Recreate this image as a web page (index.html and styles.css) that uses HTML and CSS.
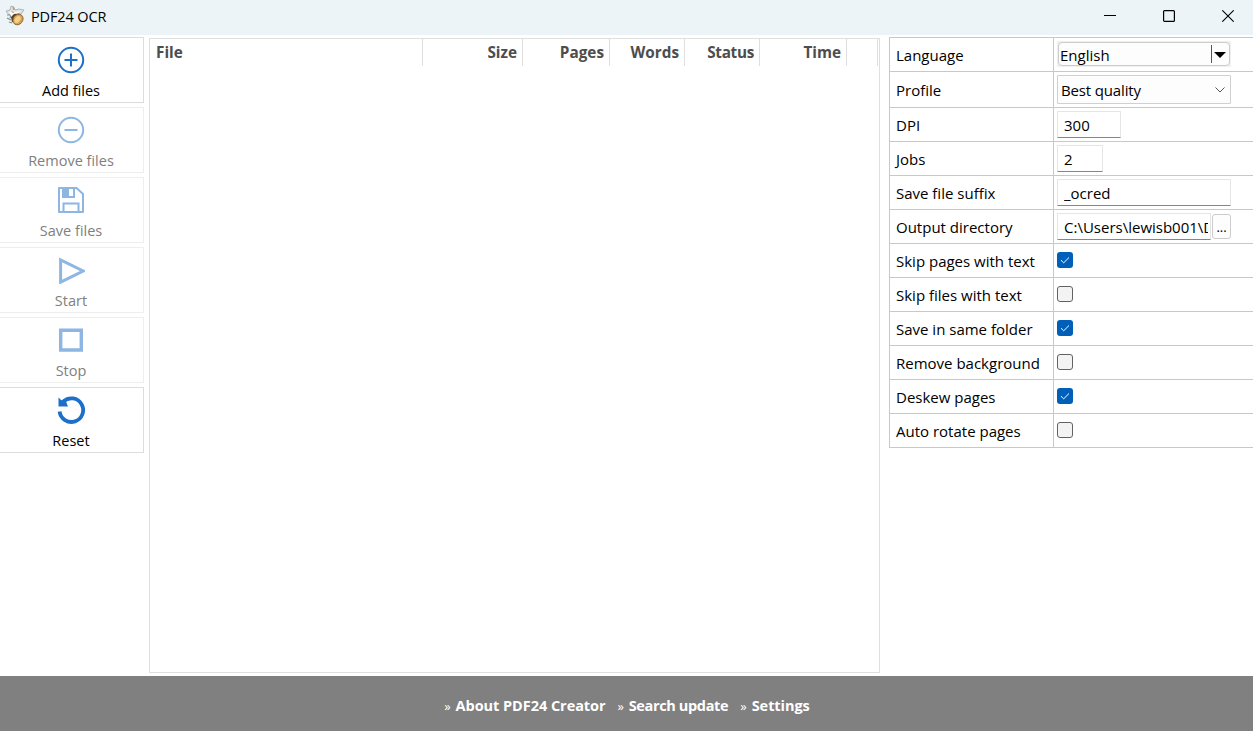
FILE: index.html
```html
<!DOCTYPE html>
<html lang="en">
<head>
  <meta charset="UTF-8">
  <title>PDF24 OCR</title>
  <link rel="stylesheet" href="styles.css">
</head>
<body>
  <header class="titlebar">
    <svg class="logo" width="20" height="22" viewBox="0 0 20 22">
      <path d="M1 6l4-1 1-4 3 1 1 3 4-1 5 1-3 4-4 1-8 0z" fill="#dfe2e4" stroke="#9a9fa4" stroke-width=".7"/>
      <path d="M2 10l4 0-1 3M2 13l4 2M4 17l3 1" fill="none" stroke="#8a8d90" stroke-width="1.200"/>
      <path d="M4 7l4-1 3 1 4-1-3 4-6 1z" fill="#fafafa"/>
      <path d="M6 12l3-3 5-.5 2 2-6 4-3 3z" fill="#4d4032"/>
      <ellipse cx="13" cy="14.500" rx="4.700" ry="5.600" transform="rotate(38 13 14.500)" fill="#d9a450" stroke="#886332" stroke-width=".9"/>
      <ellipse cx="12.500" cy="14.500" rx="2.500" ry="3.800" transform="rotate(38 12.500 14.500)" fill="#f3d18b"/>
      <path d="M6.500 6.500l2.500 1M8 2l1 3" stroke="#d39b38" stroke-width="1.300"/>
    </svg>
    <span class="title">PDF24 OCR</span>
    <div class="window-buttons">
      <svg width="12" height="12" viewBox="0 0 12 12"><path d="M0 5.500h12" stroke="#000"/></svg>
      <svg width="12" height="12" viewBox="0 0 12 12"><rect x=".6" y=".6" width="10.800" height="10.800" rx="1" fill="none" stroke="#000" stroke-width="1.200"/></svg>
      <svg width="12" height="12" viewBox="0 0 12 12"><path d="M.3.300l11.400 11.400M11.700.300L.3 11.700" stroke="#000" stroke-width="1.100"/></svg>
    </div>
  </header>

  <main>
    <nav class="toolbar">
      <button class="tool">
        <svg width="28" height="28" viewBox="0 0 28 28"><circle cx="14" cy="14" r="12.200"/><path d="M14 7.500v13M7.500 14h13"/></svg>
        <span>Add files</span>
      </button>
      <button class="tool" disabled>
        <svg width="28" height="28" viewBox="0 0 28 28"><circle cx="14" cy="14" r="12.200"/><path d="M7.500 14h13"/></svg>
        <span>Remove files</span>
      </button>
      <button class="tool" disabled>
        <svg width="28" height="28" viewBox="0 0 28 28"><path d="M2 2h17.500l6.500 6v18H2z" stroke-linejoin="round"/><path d="M6 2v9h11V2M6.500 26v-8.500h15V26"/><path d="M6 2h5v9H6z" fill="#1d70c9"/></svg>
        <span>Save files</span>
      </button>
      <button class="tool" disabled>
        <svg width="28" height="28" viewBox="0 0 28 28"><path d="M3.600 3.800v22.400L26.200 15z" stroke-width="3"/></svg>
        <span>Start</span>
      </button>
      <button class="tool" disabled>
        <svg width="28" height="28" viewBox="0 0 28 28"><path d="M3.700 4.200h20.600v19.800H3.700z" stroke-width="3.400"/></svg>
        <span>Stop</span>
      </button>
      <button class="tool">
        <svg width="28" height="28" viewBox="0 0 28 28"><path d="M2.600 15.500A11.800 11.800 0 1 0 6.500 5.300" stroke-width="3.800"/><path d="M1.500 1.500L4.300 4.200 8 3l3 7.500H1.500z" fill="#1d70c9" stroke="none"/></svg>
        <span>Reset</span>
      </button>
    </nav>

    <section class="file-list">
      <div class="list-head">
        <div>File</div>
        <div>Size</div>
        <div>Pages</div>
        <div>Words</div>
        <div class="status">Status</div>
        <div>Time</div>
        <div></div>
      </div>
    </section>

    <section class="options">
      <div class="row"><label>Language</label>
        <div class="value"><div class="combo"><div class="combo-inner"><span>English</span><i class="bar"></i><i class="arrow"></i></div></div></div>
      </div>
      <div class="row tall"><label>Profile</label>
        <div class="value"><div class="select"><span>Best quality</span><svg width="12" height="8" viewBox="0 0 12 8"><path d="M1.500 1.500L6 6l4.500-4.500" fill="none" stroke="#555"/></svg></div></div>
      </div>
      <div class="row"><label>DPI</label><div class="value"><input class="dpi" type="text" value="300"></div></div>
      <div class="row"><label>Jobs</label><div class="value"><input class="jobs" type="text" value="2"></div></div>
      <div class="row"><label>Save file suffix</label><div class="value"><input class="suffix" type="text" value="_ocred"></div></div>
      <div class="row"><label>Output directory</label><div class="value"><input class="dir" type="text" value="C:\Users\lewisb001\Documents"><button class="browse">...</button></div></div>
      <div class="row check"><label>Skip pages with text</label><div class="value"><span class="box on"><svg width="16" height="16" viewBox="0 0 16 16"><path d="M4 8.200l2.700 2.600L12 5.500"/></svg></span></div></div>
      <div class="row check"><label>Skip files with text</label><div class="value"><span class="box"></span></div></div>
      <div class="row check"><label>Save in same folder</label><div class="value"><span class="box on"><svg width="16" height="16" viewBox="0 0 16 16"><path d="M4 8.200l2.700 2.600L12 5.500"/></svg></span></div></div>
      <div class="row check"><label>Remove background</label><div class="value"><span class="box"></span></div></div>
      <div class="row check"><label>Deskew pages</label><div class="value"><span class="box on"><svg width="16" height="16" viewBox="0 0 16 16"><path d="M4 8.200l2.700 2.600L12 5.500"/></svg></span></div></div>
      <div class="row check"><label>Auto rotate pages</label><div class="value"><span class="box"></span></div></div>
    </section>
  </main>

  <footer>
    <a><i>»</i>About PDF24 Creator</a>
    <a class="update"><i>»</i>Search update</a>
    <a><i>»</i>Settings</a>
  </footer>
</body>
</html>
```
FILE: styles.css
```css
* {
  box-sizing: border-box;
}

body {
  margin: 0;
  height: 731px;
  display: flex;
  flex-direction: column;
  overflow: hidden;
  background: #fff;
  color: #000;
  font-family: "Open Sans", "Noto Sans", sans-serif;
  font-size: 15px;
  line-height: 20px;
}

svg {
  display: block;
}

/* title bar */
.titlebar {
  height: 35px;
  display: flex;
  align-items: center;
  padding: 0 19px 3px 5px;
  background: #ecf4f8;
}

.title {
  margin: 1px 0 0 6px;
  font-size: 14.5px;
  letter-spacing: -0.12px;
}

.window-buttons {
  display: flex;
  gap: 47px;
  margin-left: auto;
}

main {
  flex: 1;
  display: flex;
}

/* left buttons */
.toolbar {
  width: 144px;
  display: flex;
  flex-direction: column;
  gap: 4px;
  padding-top: 2px;
}

.tool {
  height: 66px;
  display: flex;
  flex-direction: column;
  align-items: center;
  margin: 0;
  padding: 8px 1px 0 0;
  border: 1px solid #dcdcdc;
  border-left: 0;
  background: #fff;
  color: #000;
  font: inherit;
  font-size: 14.5px;
}

.tool span {
  margin-top: 7px;
}

.tool svg {
  fill: none;
  stroke: #1d70c9;
  stroke-width: 2;
}

.tool:disabled {
  border-color: #eee;
  color: #808080;
}

.tool:disabled svg {
  opacity: 0.5;
}

/* file list */
.file-list {
  width: 731px;
  height: 635px;
  margin: 3px 0 0 5px;
  border: 1px solid #dfdfdf;
}

.list-head {
  height: 26px;
  display: grid;
  grid-template-columns: 273px 100px 87px 75px 75px 87px 31px;
  color: #4d4d4d;
  font-weight: bold;
  font-size: 15.3px;
  line-height: 27px;
}

.list-head div {
  padding-right: 5px;
  border-right: 1px solid #dfdfdf;
  text-align: right;
}

.list-head div:first-child {
  padding-left: 6px;
  text-align: left;
}

.list-head .status {
  letter-spacing: -0.3px;
}

/* options */
.options {
  flex: 1;
  margin: 2px 0 0 9px;
  align-self: flex-start;
  border-top: 1px solid #c8c8c8;
  border-left: 1px solid #c8c8c8;
}

.row {
  height: 34px;
  display: flex;
  border-bottom: 1px solid #c8c8c8;
}

.row.tall {
  height: 36px;
}

.row label {
  width: 164px;
  display: flex;
  align-items: center;
  padding: 0 0 0 6px;
  border-right: 1px solid #c8c8c8;
  white-space: nowrap;
}

.value {
  display: flex;
  align-items: flex-start;
  padding: 3px 0 0 3px;
}

.combo {
  width: 174px;
  height: 26px;
  padding: 1px;
  background: #f0f0f0;
}

.combo-inner {
  height: 24px;
  display: flex;
  align-items: center;
  padding: 2px 3px 0 1px;
  border: 1px solid #ccc;
  border-radius: 4px;
  background: #fdfdfd;
}

.bar {
  width: 1px;
  height: 18px;
  margin: -2px 2px 0 auto;
  background: #555;
}

.arrow {
  margin-top: -1px;
  border: 6px solid transparent;
  border-top-color: #000;
  border-bottom: 0;
}

.select {
  width: 174px;
  height: 29px;
  display: flex;
  align-items: center;
  justify-content: space-between;
  padding: 0 4px 0 3px;
  border: 1px solid #d0d0d0;
  border-radius: 1px;
  background: #fdfdfd;
  letter-spacing: -0.15px;
}

input {
  width: 174px;
  height: 27px;
  margin: 0;
  padding: 0 0 0 6px;
  border: 1px solid #e5e5e5;
  border-bottom-color: #868686;
  border-radius: 1px;
  background: #fff;
  font: inherit;
}

.dpi {
  width: 64px;
}

.jobs {
  width: 46px;
}

.dir {
  width: 154px;
  padding-right: 2px;
}

.browse {
  width: 19px;
  height: 25px;
  margin: 1px 0 0 1px;
  padding: 0;
  border: 1px solid #ccc;
  border-radius: 3px;
  background: #fdfdfd;
  font: inherit;
  font-size: 13px;
  line-height: 25px;
}

.check .value {
  padding-top: 8px;
}

.box {
  width: 16px;
  height: 16px;
  border: 1px solid #626262;
  border-radius: 3px;
  background: #f3f3f3;
}

.box.on {
  border: 0;
  background: #005fb8;
}

.box path {
  fill: none;
  stroke: #fff;
}

footer {
  height: 55px;
  display: flex;
  justify-content: center;
  gap: 12px;
  padding: 20px 0 0 1px;
  background: #808080;
  color: #fff;
  font-size: 14.5px;
  font-weight: bold;
  letter-spacing: -0.05px;
}

footer .update {
  letter-spacing: -0.35px;
}

footer i {
  margin-right: 5px;
  font-size: 13px;
  font-style: normal;
  font-weight: normal;
}
```
